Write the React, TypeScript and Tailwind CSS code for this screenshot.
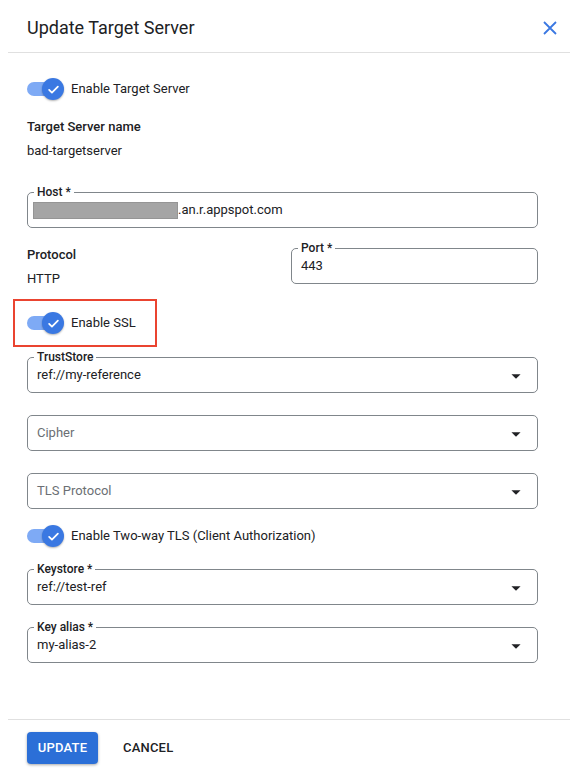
import React from "react";

const font = { fontFamily: "Roboto, 'Noto Sans', Arial, sans-serif" };

function Toggle({ label }: { label: string }) {
  return (
    <div className="flex h-[24px] items-center">
      <div className="relative h-[24px] w-[37px] shrink-0">
        <div className="absolute left-0 top-[5px] h-[14px] w-[30px] rounded-full bg-[#7eaaf5]" />
        <div className="absolute left-[15px] top-[1px] flex h-[22px] w-[22px] items-center justify-center rounded-full bg-[#3a78e2] shadow-[0_1px_2px_rgba(0,0,0,0.3)]">
          <svg width="15" height="15" viewBox="0 0 24 24" fill="none">
            <path d="M5 12.5l4.5 4.5L19 7.5" stroke="white" strokeWidth="2.8" strokeLinecap="round" strokeLinejoin="round" />
          </svg>
        </div>
      </div>
      <span className="ml-[7px] text-[13px] leading-[20px] text-[#202124]">{label}</span>
    </div>
  );
}

function Arrow() {
  return (
    <svg width="22" height="22" viewBox="0 0 24 24" className="absolute right-[10px] top-[7px]">
      <path d="M7 10l5 5 5-5z" fill="#202124" />
    </svg>
  );
}

function Field({
  label,
  value,
  placeholder,
  select,
  width = "w-[511px]",
  children,
}: {
  label?: string;
  value?: string;
  placeholder?: string;
  select?: boolean;
  width?: string;
  children?: React.ReactNode;
}) {
  return (
    <div className={`relative flex h-[36px] ${width} items-center rounded-[5px] border border-[#80868b] pl-[9px]`}>
      {label && (
        <span className="absolute left-[6px] top-[-9px] bg-white px-[3px] text-[12px] font-medium leading-[16px] text-[#202124]">
          {label}
        </span>
      )}
      {children}
      {value && <span className="text-[13px] leading-[20px] text-[#202124]">{value}</span>}
      {placeholder && <span className="text-[13px] leading-[20px] text-[#6b6f74]">{placeholder}</span>}
      {select && <Arrow />}
    </div>
  );
}

export default function App() {
  return (
    <div className="h-[783px] w-[587px] overflow-hidden bg-white" style={font}>
      {/* header */}
      <div className="flex h-[52px] items-center justify-between pl-[27px] pr-[25px] pt-[4px]">
        <h1 className="text-[18px] leading-[24px] text-[#202124]">Update Target Server</h1>
        <button className="flex h-[24px] w-[24px] items-center justify-center">
          <svg width="14" height="14" viewBox="0 0 14 14">
            <path d="M1 1l12 12M13 1L1 13" stroke="#3a78e2" strokeWidth="1.8" />
          </svg>
        </button>
      </div>
      <div className="ml-[8px] h-px w-[562px] bg-[#e0e0e0]" />

      {/* body */}
      <div className="flex flex-col pl-[27px]">
        <div className="mt-[24px]">
          <Toggle label="Enable Target Server" />
        </div>

        <div className="mt-[16px] text-[13px] font-medium leading-[20px] text-[#202124]">Target Server name</div>
        <div className="mt-[4px] text-[13px] leading-[20px] text-[#202124]">bad-targetserver</div>

        <div className="mt-[31px]">
          <Field label="Host *">
            <div className="ml-[-4px] h-[17px] w-[145px] border border-[#959595] bg-[#a5a5a5]" />
            <span className="text-[13px] leading-[20px] text-[#202124]">.an.r.appspot.com</span>
          </Field>
        </div>

        <div className="mt-[17px] flex items-start">
          <div className="flex w-[264px] flex-col">
            <div className="text-[13px] font-medium leading-[20px] text-[#202124]">Protocol</div>
            <div className="mt-[4px] text-[13px] leading-[20px] text-[#202124]">HTTP</div>
          </div>
          <div className="mt-[3px]">
            <Field label="Port *" value="443" width="w-[247px]" />
          </div>
        </div>

        <div className="ml-[-14px] mt-[10px] flex h-[48px] w-[144px] items-center border-2 border-[#ea4430] pl-[12px]">
          <Toggle label="Enable SSL" />
        </div>

        <div className="mt-[10px]">
          <Field label="TrustStore" value="ref://my-reference" select />
        </div>
        <div className="mt-[22px]">
          <Field placeholder="Cipher" select />
        </div>
        <div className="mt-[22px]">
          <Field placeholder="TLS Protocol" select />
        </div>

        <div className="mt-[15px]">
          <Toggle label="Enable Two-way TLS (Client Authorization)" />
        </div>

        <div className="mt-[21px]">
          <Field label="Keystore *" value="ref://test-ref" select />
        </div>
        <div className="mt-[22px]">
          <Field label="Key alias *" value="my-alias-2" select />
        </div>
      </div>

      {/* footer */}
      <div className="ml-[8px] mt-[56px] h-px w-[562px] bg-[#e0e0e0]" />
      <div className="mt-[12px] flex items-center pl-[27px]">
        <button className="h-[32px] w-[71px] rounded-[4px] bg-[#2b6fd7] text-[13px] font-medium tracking-[0.2px] text-white shadow-[0_1px_3px_rgba(0,0,0,0.35)]">
          UPDATE
        </button>
        <button className="ml-[25px] text-[13px] font-medium tracking-[0.2px] text-[#202124]">CANCEL</button>
      </div>
    </div>
  );
}
